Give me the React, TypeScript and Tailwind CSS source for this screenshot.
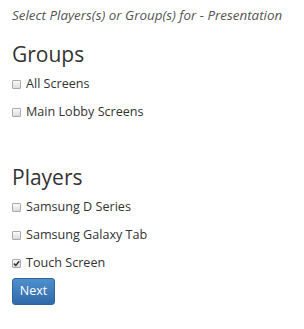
import { useState } from "react";

const groups = ["All Screens", "Main Lobby Screens"];
const players = ["Samsung D Series", "Samsung Galaxy Tab", "Touch Screen"];

function Check({ label, checked, onToggle }: { label: string; checked: boolean; onToggle: () => void }) {
    return (
        <label className="flex items-center h-[28px] cursor-pointer" onClick={onToggle}>
            <span className="relative w-[9px] h-[9px] border border-[#a9a9a9] rounded-[1px] bg-gradient-to-b from-[#fafafa] to-[#dcdcdc] mr-[5px]">
                {checked && (
                    <svg viewBox="0 0 9 9" className="absolute -left-px -top-px w-[9px] h-[9px]">
                        <path d="M2 4.6 L3.8 6.4 L7.2 2.2" stroke="#333" strokeWidth="1.5" fill="none" />
                    </svg>
                )}
            </span>
            <span className="text-[12.6px] text-[#333]">{label}</span>
        </label>
    );
}

export default function App() {
    const [selected, setSelected] = useState<string[]>(["Touch Screen"]);

    function toggle(name: string) {
        setSelected((s) => (s.includes(name) ? s.filter((x) => x !== name) : [...s, name]));
    }

    return (
        <div className="w-[304px] h-[329px] bg-white pl-[12px] pt-[6px]" style={{ fontFamily: '"Open Sans", sans-serif' }}>
            <p className="italic text-[13.4px] text-[#555] leading-[18px]">Select Players(s) or Group(s) for - Presentation</p>

            <h3 className="text-[21px] text-[#333] leading-[24px] mt-[18px] mb-[4px]">Groups</h3>
            {groups.map((g) => (
                <Check key={g} label={g} checked={selected.includes(g)} onToggle={() => toggle(g)} />
            ))}

            <h3 className="text-[21px] text-[#333] leading-[24px] mt-[39px] mb-[4px]">Players</h3>
            {players.map((p) => (
                <Check key={p} label={p} checked={selected.includes(p)} onToggle={() => toggle(p)} />
            ))}

            <button className="mt-0 w-[43px] h-[27px] rounded-[3px] border border-[#2b669a] bg-gradient-to-b from-[#4f8fcd] to-[#3069a8] text-white text-[12.5px]">
                Next
            </button>
        </div>
    );
}
